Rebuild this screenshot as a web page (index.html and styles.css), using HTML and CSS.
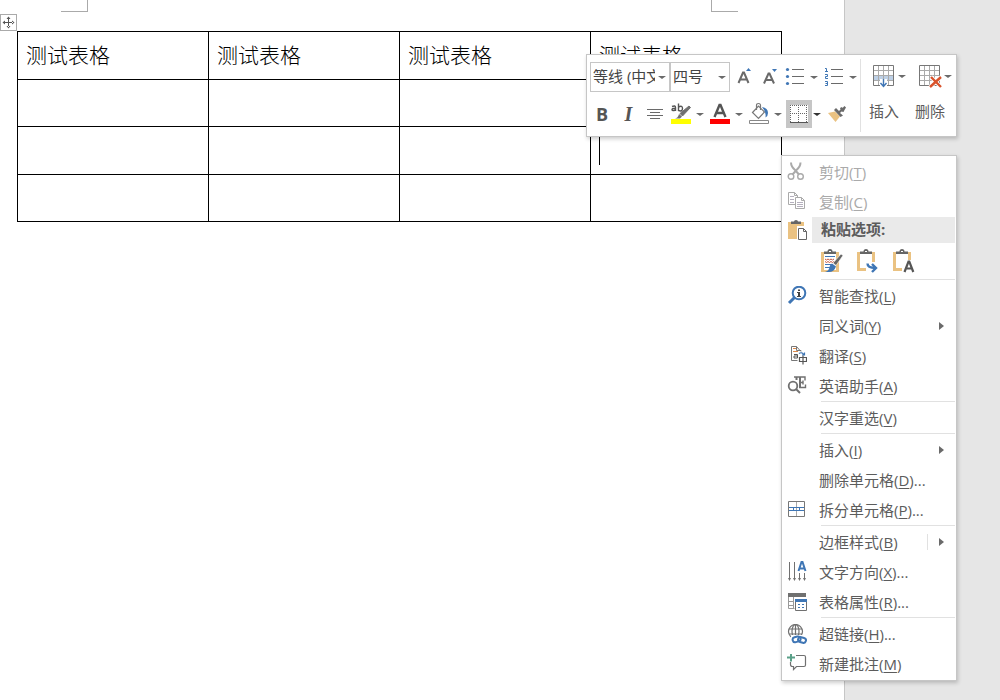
FILE: index.html
```html
<!DOCTYPE html>
<html lang="zh-CN">
<head>
<meta charset="utf-8">
<title>测试表格</title>
<link rel="stylesheet" href="styles.css">
</head>
<body>
<main class="workspace">
  <section class="sheet">
    <div class="crop-marks"><span class="mark mark-left"></span><span class="mark mark-right"></span></div>
    <button class="move-handle" aria-label="移动表格">
      <svg width="15" height="15" viewBox="0 0 15 15" fill="#555"><path d="M7 3h1v9H7zM3 7h9v1H3zM7.500 1.500l2 2.500h-4zM7.500 13.500l2-2.500h-4zM1.500 7.500l2.500-2v4zM13.500 7.500l-2.500-2v4z"/></svg>
    </button>
    <table class="doc-table">
      <tbody>
        <tr><td>测试表格</td><td>测试表格</td><td>测试表格</td><td>测试表格</td></tr>
        <tr><td></td><td></td><td></td><td></td></tr>
        <tr><td></td><td></td><td></td><td><span class="text-cursor"></span></td></tr>
        <tr><td></td><td></td><td></td><td></td></tr>
      </tbody>
    </table>
  </section>
</main>

<div class="mini-toolbar" role="toolbar" aria-label="格式">
  <div class="tool-rows">
    <div class="tool-row">
      <div class="combos">
        <div class="combo combo-font"><select aria-label="字体"><option>等线 (中文正文)</option></select></div>
        <div class="combo combo-size"><select aria-label="字号"><option>四号</option></select></div>
      </div>
      <button class="tool" aria-label="增大字号">
        <svg width="24" height="24" viewBox="0 0 24 24"><path d="M6.500 18L11 7.500h1L16.500 18M8 14.500h7" fill="none" stroke="#6a6a6a" stroke-width="2"/><path d="M14 6l2.500-3L19 6z" fill="#3f76b5"/></svg>
      </button>
      <button class="tool" aria-label="减小字号">
        <svg width="24" height="24" viewBox="0 0 24 24"><path d="M6 18.500L10.500 8.500h1L16 18.500M7.500 15h7" fill="none" stroke="#6a6a6a" stroke-width="2"/><path d="M14 4h5l-2.500 3z" fill="#3f76b5"/></svg>
      </button>
      <button class="split" aria-label="项目符号">
        <svg width="24" height="24" viewBox="0 0 24 24"><g fill="#3f76b5"><circle cx="4.500" cy="4.500" r="1.600"/><circle cx="4.500" cy="11.500" r="1.600"/><circle cx="4.500" cy="18.500" r="1.600"/></g><path d="M9 4h12v1H9zM9 11h12v1H9zM9 18h12v1H9z" fill="#6a6a6a"/></svg>
        <span class="caret"></span>
      </button>
      <button class="split" aria-label="编号">
        <svg width="24" height="24" viewBox="0 0 24 24"><path d="M3 3.500h1.500V7M3 6.500h3M3 9.500h2.500v2h-2v2H6M3 16.500h2.500v4H3M3.500 18.500h2" fill="none" stroke="#3f76b5"/><path d="M9 4h12v1H9zM9 11h12v1H9zM9 18h12v1H9z" fill="#6a6a6a"/></svg>
        <span class="caret"></span>
      </button>
    </div>
    <div class="tool-row tool-row-styles">
      <button class="tool letter-bold">B</button>
      <button class="tool letter-italic">I</button>
      <button class="tool" aria-label="居中">
        <svg width="24" height="24" viewBox="0 0 24 24" fill="#6a6a6a"><path d="M3 7h16v1H3zM6 10h10v1H6zM3 13h16v1H3zM6 16h10v1H6z"/></svg>
      </button>
      <button class="split" aria-label="突出显示">
        <svg width="24" height="24" viewBox="0 0 24 24"><g fill="none" stroke="#555" stroke-width="1.400"><path d="M3 4.500q3.500-1.500 3.500 1V9M6.500 6.300Q3 6.300 3 7.800t3.500.2M9.500 1.500V9M9.500 5q4-2 4 1.500T9.500 8.500"/></g><path d="M20 4l1.500 1.500-8 8.500-2.500-2.500z" fill="#707070" stroke="#707070"/><path d="M10 12l3 2.500-2 2H6q3-.5 4-4.500z" fill="#707070"/><path d="M2 17h20v5H2z" fill="#ff0"/></svg>
        <span class="caret"></span>
      </button>
      <button class="split" aria-label="字体颜色">
        <svg width="24" height="24" viewBox="0 0 24 24"><path d="M6.500 15L11.500 3h1l5 12M8.500 11h7" fill="none" stroke="#555" stroke-width="2.400"/><path d="M2 17h20v5H2z" fill="red"/></svg>
        <span class="caret"></span>
      </button>
      <button class="split" aria-label="底纹">
        <svg width="24" height="24" viewBox="0 0 24 24"><path d="M5.500 10.500l6-6.500 6 6-6 6.500zM9.500 8V3.500q0-2 2-2t2 2V8" fill="#fff" stroke="#777" stroke-width="1.200"/><path d="M15 5q6 1 6 6 0 3-2.500 4.500 1-5-3.500-10.500z" fill="#3f76b5"/><path d="M2.500 18.500h19v3h-19z" fill="#fff" stroke="#888"/></svg>
        <span class="caret"></span>
      </button>
      <button class="split split-active" aria-label="边框">
        <span class="pressed"><svg width="18" height="18" viewBox="0 0 18 18" shape-rendering="crispEdges"><path d="M0 0h18v18H0z" fill="#fff"/><g fill="none" stroke="#666" stroke-dasharray="1 1"><path d="M0 .5h18"/><path d="M0 8.500h18"/><path d="M.5 0v17"/><path d="M8.500 0v17"/><path d="M16.500 0v17"/></g><path d="M0 17h18v1H0z" fill="#555"/></svg></span>
        <span class="caret"></span>
      </button>
      <button class="tool tool-brush" aria-label="格式刷">
        <svg width="20" height="18" viewBox="0 0 20 18"><path d="M1 8l7-1.500 5 5L8.500 17z" fill="#eac282"/><path d="M7 5l2-2 3 3 1.500-1.500L13 3l2-1 .5 1L17.500 1l1.500 1.500L17.500 5l-1 2-2-.5L13 8l3 2.500L13.500 12z" fill="#6a6a6a"/></svg>
      </button>
    </div>
  </div>
  <div class="large-tools">
    <button class="large-tool">
      <span class="large-icon"><svg width="24" height="24" viewBox="0 0 24 24"><path d="M1 1h20v20H1z" fill="#fff"/><path d="M1 11h20v5H1z" fill="#bdd0e6"/><path d="M6.500 1v20M11.500 1v20M16.500 1v20M1 6.500h20M1 11.500h20M1 16.500h20" stroke="#aaa" fill="none"/><path d="M1.500 1.500h20v20h-20z" fill="none" stroke="#777"/><path d="M8 15h7v8H8z" fill="#fff"/><path d="M11.500 15v7.500M8.500 19l3 3.500 3-3.500" fill="none" stroke="#3f76b5" stroke-width="1.400"/></svg><span class="caret"></span></span>
      <span>插入</span>
    </button>
    <button class="large-tool">
      <span class="large-icon"><svg width="24" height="24" viewBox="0 0 24 24"><path d="M6.500 1v20M11.500 1v20M16.500 1v20M1 6.500h20M1 11.500h20M1 16.500h20" stroke="#aaa" fill="none"/><path d="M1.500 1.500h20v20h-20z" fill="none" stroke="#777"/><path d="M13 13l10 10M23 13L12 23" stroke="#fff" stroke-width="4"/><path d="M13 13l10 10M23 13L12 23" stroke="#d9532c" stroke-width="2.400"/></svg><span class="caret"></span></span>
      <span>删除</span>
    </button>
  </div>
</div>

<div class="context-menu" role="menu">
  <button class="item" role="menuitem" disabled>
    <svg width="20" height="20" viewBox="0 0 20 20"><path d="M4 .5q0 4 4 7.500l4 4.500M13.500.5q0 4-4 7.500l-4 4.500" fill="none" stroke="#aaa" stroke-width="2"/><g fill="none" stroke="#aaa" stroke-width="1.400"><circle cx="4" cy="14.500" r="2.800"/><circle cx="13.500" cy="14.500" r="2.800"/></g></svg>
    <span>剪切(<u>T</u>)</span>
  </button>
  <button class="item" role="menuitem" disabled>
    <svg width="20" height="20" viewBox="0 0 20 20"><g fill="#fff" stroke="#aaa"><path d="M1.500.5h6l3 3v9h-9zM7.500.5v3h3"/><path d="M8.500 5.500h6l3 3v8h-9zM14.500 5.500v3h3"/></g><path d="M3 4.500h4M3 7.500h4M3 10.500h4M10 10.500h6M10 12.500h6M10 14.500h6" stroke="#b5b0be"/></svg>
    <span>复制(<u>C</u>)</span>
  </button>
  <div class="paste-header">
    <svg width="20" height="20" viewBox="0 0 20 20"><path d="M1 2h16v17H1z" fill="#eac282"/><path d="M4 4V1.500h3Q7 0 9 0t2 1.500h3V4z" fill="#666"/><path d="M10 6h10v14H10z" fill="#fff"/><path d="M11.500 8.500h5l3 3v8h-8zM16.500 8.500v3h3" fill="#fff" stroke="#666"/></svg>
    <strong class="paste-title">粘贴选项:</strong>
  </div>
  <div class="paste-options">
    <button class="paste-option" aria-label="保留源格式">
      <svg width="24" height="24" viewBox="0 0 24 24"><path d="M2 3h18v20H2z" fill="#eac282"/><path d="M5 5h12v16H5z" fill="#fff"/><path d="M5 5V2.500h3.500Q8.500 0 11 0t2.500 2.500H17V5z" fill="#666"/><path d="M10 2h2v1h-2z" fill="#fff"/><path d="M6 7.500h10M6 15.500h7M6 18.500h5" stroke="#3f76b5"/><path d="M6 10l1.500 1L9 10l1.500 1L12 10l1.500 1 1.500-1M6 12.500l1.500 1 1.500-1 1.500 1 1.500-1 1.500 1 1.500-1" fill="none" stroke="#c8553a"/><path d="M22 5l2 1.500-7 10-3-2.500z" fill="#666" stroke="#fff" stroke-width=".6"/><path d="M13 14.500l4 3q-2 5.500-7 5.500H6q4-1 4.500-5 .5-3 2.500-3.500z" fill="#3f76b5"/></svg>
    </button>
    <button class="paste-option" aria-label="合并格式">
      <svg width="24" height="24" viewBox="0 0 24 24"><path d="M2 3h18v19H2z" fill="#eac282"/><path d="M5 5h12v14H5zM11 13h9v9h-9z" fill="#fff"/><path d="M5 5V2.500h3.500Q8.500 0 11 0t2.500 2.500H17V5z" fill="#666"/><path d="M10 2h2v1h-2z" fill="#fff"/><path d="M12.500 14.500q0 4.500 8 4.500M17 15l4 4-4 4" fill="none" stroke="#3f76b5" stroke-width="2.400"/></svg>
    </button>
    <button class="paste-option" aria-label="只保留文本">
      <svg width="24" height="24" viewBox="0 0 24 24"><path d="M2 3h18v19H2z" fill="#eac282"/><path d="M5 5h12v14H5zM11 11h9v11h-9z" fill="#fff"/><path d="M5 5V2.500h3.500Q8.500 0 11 0t2.500 2.500H17V5z" fill="#666"/><path d="M10 2h2v1h-2z" fill="#fff"/><path d="M13.500 23l4-10.500h.8l4 10.500M15 19.500h6" fill="none" stroke="#555" stroke-width="2.200"/></svg>
    </button>
  </div>
  <hr>
  <button class="item" role="menuitem">
    <svg width="20" height="20" viewBox="0 0 20 20"><circle cx="12" cy="7" r="6.300" fill="#fff" stroke="#3f76b5" stroke-width="2"/><path d="M7.500 11.500L2 17" stroke="#3f76b5" stroke-width="3"/><path d="M11 3.500h2V5h-2zM10 6h3v4h1v1h-4v-1h1V7h-1z" fill="#444"/></svg>
    <span>智能查找(<u>L</u>)</span>
  </button>
  <button class="item" role="menuitem"><span class="no-icon"></span><span>同义词(<u>Y</u>)</span><span class="submenu-arrow"></span></button>
  <button class="item" role="menuitem">
    <svg width="20" height="20" viewBox="0 0 20 20"><path d="M13 4.500L9.500.5H4.500v14h6M9.500.5V4.500H14v1" fill="none" stroke="#777"/><path d="M6 2.500h3M6 5.500h5" stroke="#e08a4a" stroke-width="1.200"/><path d="M7 8.500h3.500V12M10.500 10H7v2h3.500" fill="none" stroke="#555"/><path d="M12 7.500q3-2 5 1.500M15 9h2.500V6.500" fill="none" stroke="#3f76b5" stroke-width="1.200"/><path d="M12.500 11.500h7v4h-7zM16 9.500v9" fill="none" stroke="#555" stroke-width="1.200"/></svg>
    <span>翻译(<u>S</u>)</span>
  </button>
  <button class="item" role="menuitem">
    <svg width="20" height="20" viewBox="0 0 20 20"><circle cx="6" cy="10" r="4.300" fill="none" stroke="#707070" stroke-width="1.800"/><path d="M9 13l4 4" stroke="#707070" stroke-width="2"/><path d="M7 1h11v3.500M13 6.500h3.500M16 4.500v4M12 11.500h6.500V8.500" fill="none" stroke="#707070" stroke-width="1.400"/><path d="M9.500 1v3M13 1v10.500" stroke="#707070" stroke-width="2"/></svg>
    <span>英语助手(<u>A</u>)</span>
  </button>
  <hr>
  <button class="item" role="menuitem"><span class="no-icon"></span><span>汉字重选(<u>V</u>)</span></button>
  <hr>
  <button class="item" role="menuitem"><span class="no-icon"></span><span>插入(<u>I</u>)</span><span class="submenu-arrow"></span></button>
  <button class="item" role="menuitem"><span class="no-icon"></span><span>删除单元格(<u>D</u>)...</span></button>
  <button class="item" role="menuitem">
    <svg width="20" height="20" viewBox="0 0 20 20"><path d="M9.500 2v14" stroke="#aaa"/><path d="M1.500 1.500h16v15h-16z" fill="none" stroke="#777"/><path d="M2 7.500h15M2 10.500h15M6.500 7v4M12.500 7v4" stroke="#3f76b5"/></svg>
    <span>拆分单元格(<u>P</u>)...</span>
  </button>
  <hr>
  <button class="item" role="menuitem"><span class="no-icon"></span><span>边框样式(<u>B</u>)</span><span class="submenu-arrow submenu-split"></span></button>
  <button class="item" role="menuitem">
    <svg width="20" height="22" viewBox="0 0 20 22"><path d="M2.500 1v17M7.500 1v17M12.500 12v6M17.500 12v6" stroke="#707070"/><path d="M1 17h3l-1.500 3zM6 17h3l-1.500 3zM11 17h3l-1.500 3zM16 17h3l-1.500 3z" fill="#707070"/><path d="M11.500 10l3-9h1l3 9M12.500 7.500h5" fill="none" stroke="#3f76b5" stroke-width="2"/></svg>
    <span>文字方向(<u>X</u>)...</span>
  </button>
  <button class="item" role="menuitem">
    <svg width="20" height="20" viewBox="0 0 20 20"><path d="M1 1h18v4H1z" fill="#707070"/><path d="M1.500 5v11.500h6M2 9.500h5M2 13.500h5M6.500 5v11" fill="none" stroke="#999"/><path d="M8.500 7.500h11v11h-11z" fill="#fff" stroke="#707070"/><path d="M8 7h12v3H8z" fill="#3f76b5"/><path d="M11 12.500h2M15 12.500h2M11 15.500h2M15 15.500h2" stroke="#3f76b5"/></svg>
    <span>表格属性(<u>R</u>)...</span>
  </button>
  <hr>
  <button class="item" role="menuitem">
    <svg width="20" height="20" viewBox="0 0 20 20"><g fill="none" stroke="#707070" stroke-width="1.200"><circle cx="8.500" cy="7.500" r="7"/><ellipse cx="8.500" cy="7.500" rx="3.500" ry="7"/><path d="M2 5h13M2 10h13M8.500 0v15"/></g><rect x="4" y="11" width="16" height="9" fill="#fff"/><g fill="none" stroke="#3f76b5" stroke-width="2"><rect x="5.500" y="13" width="8" height="5" rx="2.500" transform="rotate(-15 9 15)"/><rect x="11" y="13.500" width="8" height="5" rx="2.500" transform="rotate(15 15 16)"/></g></svg>
    <span>超链接(<u>H</u>)...</span>
  </button>
  <button class="item" role="menuitem">
    <svg width="20" height="20" viewBox="0 0 20 20"><path d="M9 1.500h8q1.500 0 1.500 1.500v8q0 1.500-1.500 1.500H9.500L6.500 15.500v-3h-1q-2 0-2-2V8" fill="none" stroke="#707070" stroke-width="1.200"/><path d="M0 3.500h8M4 0v7.500" stroke="#5aa088" stroke-width="2"/></svg>
    <span>新建批注(<u>M</u>)</span>
  </button>
</div>
</body>
</html>
```
FILE: styles.css
```css
* { box-sizing: border-box; }

body {
  margin: 0;
  background: #e6e6e6;
  color: #5c5c5c;
  font: 15px/20px "Open Sans", "Noto Sans CJK SC", sans-serif;
}

button {
  margin: 0;
  padding: 0;
  border: 0;
  background: none;
  color: inherit;
  font: inherit;
}

svg { display: block; flex: none; }

/* Document page */
.workspace { min-height: 100vh; display: flex; padding-right: 155px; }
.sheet { flex: 1; background: #fff; border-right: 1px solid #c6c6c6; }
.crop-marks { display: flex; justify-content: space-between; padding: 0 106px 0 61px; }
.mark { width: 27px; height: 12px; border-bottom: 1px solid #aaa; }
.mark-left { border-right: 1px solid #aaa; }
.mark-right { border-left: 1px solid #aaa; }
.move-handle {
  display: block;
  margin-top: 2px;
  width: 17px;
  height: 17px;
  border: 1px solid #aaa;
}
.doc-table {
  width: calc(100% - 79px);
  margin-left: 17px;
  border-collapse: collapse;
  table-layout: fixed;
  color: #000;
  font: 300 21px/30px "Noto Sans CJK SC", sans-serif;
}
.doc-table tr { height: 47px; }
.doc-table tr:nth-child(odd) { height: 48px; }
.doc-table td { border: 1px solid #000; padding: 0 8px 4px; }
.text-cursor { display: block; width: 1px; height: 32px; background: #000; }

/* Floating surfaces */
.mini-toolbar, .context-menu {
  position: absolute;
  background: #fff;
  border: 1px solid #c6c6c6;
  box-shadow: 1px 2px 4px rgba(0, 0, 0, .2);
}
.mini-toolbar { left: 586px; top: 54px; width: 371px; display: flex; }
.context-menu { left: 781px; top: 155px; width: 176px; padding: 1px 1px 1px 0; }

/* Mini toolbar */
.tool-rows { display: flex; flex-direction: column; gap: 8px; padding: 7px 0 8px 3px; width: 273px; }
.tool-row { display: flex; gap: 1px; height: 30px; }
.tool-row-styles { height: 28px; }
.combos { display: flex; }
.combo { position: relative; border: 1px solid #c6c6c6; }
.combo-font { width: 80px; }
.combo-size { width: 60px; }
.combo select {
  appearance: none;
  display: block;
  width: 100%;
  height: 28px;
  margin: 0;
  padding: 0 14px 3px 2px;
  border: 0;
  background: none;
  color: #444;
  font: inherit;
}
.combo::after, .caret::after {
  content: "";
  border: 4px solid transparent;
  border-top: 3px solid #6a6a6a;
  border-bottom: 0;
}
.combo::after { position: absolute; right: 3px; top: 13px; }
.tool { width: 25px; display: flex; align-items: center; justify-content: center; }
.split { display: flex; align-items: center; }
.caret { width: 14px; display: flex; justify-content: center; }
.letter-bold, .letter-italic { font-size: 18px; font-weight: 700; color: #555; }
.letter-bold { width: 24px; }
.letter-italic { width: 27px; font-family: "Liberation Serif", serif; font-size: 20px; font-style: italic; }
.pressed {
  width: 26px;
  height: 28px;
  display: flex;
  align-items: center;
  justify-content: center;
  background: #c6c6c6;
}
.split-active .caret { width: 10px; }
.split-active .caret::after { border-top-color: #333; }
.tool-brush { width: 28px; }
.large-tools { display: flex; margin: 4px 0; padding-left: 3px; border-left: 1px solid #e1e1e1; }
.large-tool {
  width: 46px;
  display: flex;
  flex-direction: column;
  align-items: flex-start;
  gap: 13px;
  padding-top: 5px;
}
.large-tool > span { padding-left: 5px; }
.large-tool .large-icon { display: flex; align-items: center; padding-left: 8px; }
.large-icon .caret { width: 12px; }

/* Context menu */
.item {
  width: 100%;
  height: 30px;
  display: flex;
  align-items: center;
  gap: 12px;
  padding-left: 5px;
  text-align: left;
  white-space: nowrap;
}
.item:disabled { color: #aaa; }
.item u { text-underline-offset: 2px; text-decoration-thickness: 1px; }
.no-icon { width: 20px; flex: none; }
.submenu-arrow { margin-left: auto; padding: 4px 11px; }
.submenu-arrow::after {
  content: "";
  display: block;
  border: 4px solid transparent;
  border-left: 5px solid #6a6a6a;
  border-right: 0;
}
.submenu-split { border-left: 1px solid #e1e1e1; }
.paste-header { display: flex; align-items: center; gap: 5px; padding-left: 5px; height: 26px; }
.paste-title { flex: 1; padding: 2px 9px 4px; background: #eaeaea; }
.paste-options { display: flex; align-items: center; gap: 12px; height: 36px; padding-left: 37px; }
hr { height: 1px; margin: 0 0 1px 39px; border: 0; background: #e1e1e1; }
```
